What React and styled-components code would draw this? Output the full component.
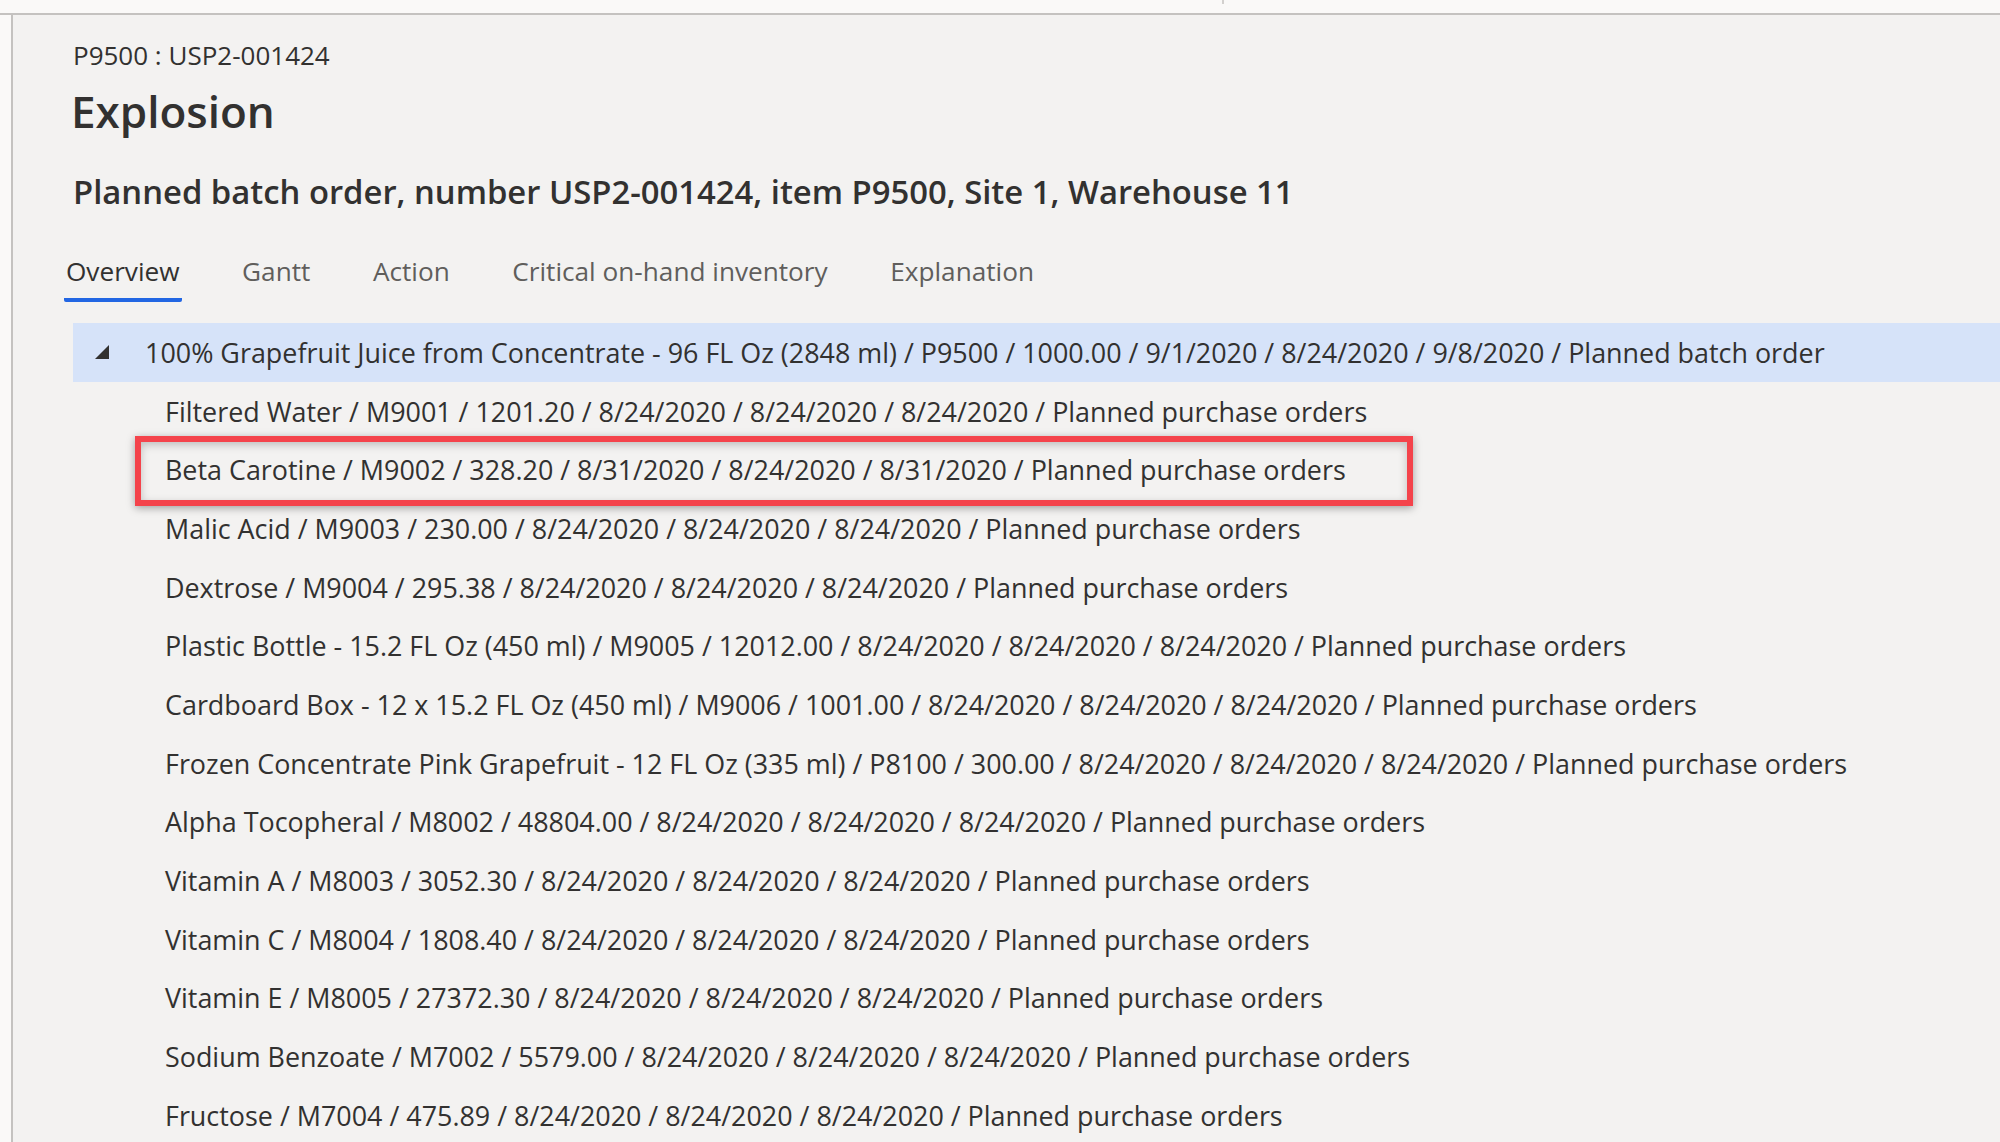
import React from 'react';
import styled, { createGlobalStyle } from 'styled-components';

const GlobalStyle = createGlobalStyle`
  html, body {
    margin: 0;
    padding: 0;
    background: #f3f2f1;
    font-family: "Open Sans", "Noto Sans", sans-serif;
    color: #323130;
  }
`;

const Page = styled.div`
  width: 2000px;
  height: 1142px;
  display: flex;
  flex-direction: column;
  overflow: hidden;
`;

const TopBar = styled.div`
  height: 13px;
  flex: none;
  background: #faf9f8;
  border-bottom: 2px solid #c4c2c0;
  display: flex;
  padding-left: 1222px;
`;

const TopTick = styled.div`
  width: 2px;
  height: 4px;
  background: #d2d0ce;
`;

const Body = styled.div`
  flex: 1;
  display: flex;
  min-height: 0;
`;

const Rail = styled.div`
  width: 11px;
  flex: none;
  background: #faf9f8;
  border-right: 2px solid #c4c2c0;
`;

const Main = styled.main`
  flex: 1;
  padding: 23px 0 0 60px;
  display: flex;
  flex-direction: column;
  min-width: 0;
`;

const Caption = styled.div`
  font-size: 26px;
  line-height: 34px;
  color: #323130;
`;

const Title = styled.h1`
  margin: 11px 0 0 -2px;
  font-size: 44px;
  line-height: 56px;
  font-weight: 600;
  color: #323130;
`;

const Subtitle = styled.h2`
  margin: 31px 0 0;
  font-size: 32.8px;
  line-height: 44px;
  font-weight: 600;
  color: #323130;
  white-space: nowrap;
`;

const Tabs = styled.div`
  margin: 37px 0 0 -9px;
  display: flex;
  gap: 58.5px;
`;

const Tab = styled.div`
  padding: 0 2px 7px;
  font-size: 26.2px;
  line-height: 40px;
  color: ${p => (p.$active ? '#323130' : '#605e5c')};
  border-bottom: 4px solid ${p => (p.$active ? '#2266e3' : 'transparent')};
  border-radius: 2px;
`;

const Tree = styled.div`
  margin-top: 21px;
  display: flex;
  flex-direction: column;
`;

const Row = styled.div`
  position: relative;
  height: 58.7px;
  display: flex;
  align-items: center;
  gap: 35px;
  padding-left: ${p => (p.$root ? '22px' : '92px')};
  background: ${p => (p.$root ? '#d6e3f9' : 'transparent')};
  font-size: 26.9px;
  white-space: nowrap;
  color: #323130;
`;

const Highlight = styled.div`
  position: absolute;
  left: 62px;
  top: -4px;
  width: 1278px;
  height: 70px;
  box-sizing: border-box;
  border: 6px solid #f4434b;
  box-shadow: 0 2px 8px rgba(0, 0, 0, 0.35), inset 0 3px 8px rgba(0, 0, 0, 0.22);
  pointer-events: none;
`;

const tabs = ['Overview', 'Gantt', 'Action', 'Critical on-hand inventory', 'Explanation'];

const children = [
  'Filtered Water / M9001 / 1201.20 / 8/24/2020 / 8/24/2020 / 8/24/2020 / Planned purchase orders',
  'Beta Carotine / M9002 / 328.20 / 8/31/2020 / 8/24/2020 / 8/31/2020 / Planned purchase orders',
  'Malic Acid / M9003 / 230.00 / 8/24/2020 / 8/24/2020 / 8/24/2020 / Planned purchase orders',
  'Dextrose / M9004 / 295.38 / 8/24/2020 / 8/24/2020 / 8/24/2020 / Planned purchase orders',
  'Plastic Bottle - 15.2 FL Oz (450 ml) / M9005 / 12012.00 / 8/24/2020 / 8/24/2020 / 8/24/2020 / Planned purchase orders',
  'Cardboard Box - 12 x 15.2 FL Oz (450 ml) / M9006 / 1001.00 / 8/24/2020 / 8/24/2020 / 8/24/2020 / Planned purchase orders',
  'Frozen Concentrate Pink Grapefruit - 12 FL Oz (335 ml) / P8100 / 300.00 / 8/24/2020 / 8/24/2020 / 8/24/2020 / Planned purchase orders',
  'Alpha Tocopheral / M8002 / 48804.00 / 8/24/2020 / 8/24/2020 / 8/24/2020 / Planned purchase orders',
  'Vitamin A / M8003 / 3052.30 / 8/24/2020 / 8/24/2020 / 8/24/2020 / Planned purchase orders',
  'Vitamin C / M8004 / 1808.40 / 8/24/2020 / 8/24/2020 / 8/24/2020 / Planned purchase orders',
  'Vitamin E / M8005 / 27372.30 / 8/24/2020 / 8/24/2020 / 8/24/2020 / Planned purchase orders',
  'Sodium Benzoate / M7002 / 5579.00 / 8/24/2020 / 8/24/2020 / 8/24/2020 / Planned purchase orders',
  'Fructose / M7004 / 475.89 / 8/24/2020 / 8/24/2020 / 8/24/2020 / Planned purchase orders',
];

function Collapse() {
  return (
    <svg width="15" height="14" viewBox="0 0 15 14">
      <polygon points="14,0 14,14 0,14" fill="#323130" />
    </svg>
  );
}

function App() {
  return (
    <Page>
      <GlobalStyle />
      <TopBar>
        <TopTick />
      </TopBar>
      <Body>
        <Rail />
        <Main>
          <Caption>P9500 : USP2-001424</Caption>
          <Title>Explosion</Title>
          <Subtitle>Planned batch order, number USP2-001424, item P9500, Site 1, Warehouse 11</Subtitle>
          <Tabs>
            {tabs.map((t, i) => (
              <Tab key={t} $active={i === 0}>{t}</Tab>
            ))}
          </Tabs>
          <Tree>
            <Row $root>
              <Collapse />
              <span>100% Grapefruit Juice from Concentrate - 96 FL Oz (2848 ml) / P9500 / 1000.00 / 9/1/2020 / 8/24/2020 / 9/8/2020 / Planned batch order</span>
            </Row>
            {children.map((c, i) => (
              <Row key={i}>
                {i === 1 && <Highlight />}
                <span>{c}</span>
              </Row>
            ))}
          </Tree>
        </Main>
      </Body>
    </Page>
  );
}

export default App;
